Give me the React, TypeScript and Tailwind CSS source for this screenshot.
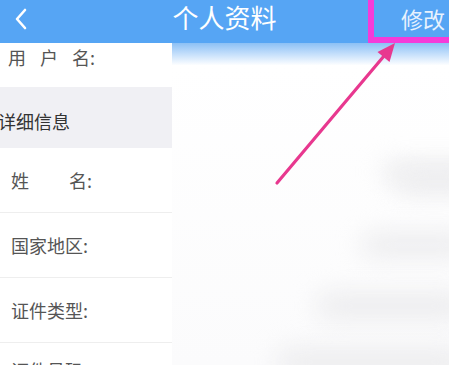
import React from 'react'

const FONT = { fontFamily: '"Noto Sans CJK SC", "Noto Sans", sans-serif' }

const rows = [
  { label: '姓\u3000\u3000 名:', sep: true },
  { label: '国家地区:', sep: true },
  { label: '证件类型:', sep: true },
  { label: '证件号码:', sep: false },
]

// 右侧模糊区域里的灰色块
const blobs = [
  'top-[120px] left-[210px] w-[200px] h-[18px]',
  'top-[128px] left-[225px] w-[80px] h-[22px]',
  'top-[190px] left-[190px] w-[110px] h-[24px]',
  'top-[250px] left-[145px] w-[150px] h-[26px]',
  'top-[306px] left-[105px] w-[190px] h-[26px]',
]

export default function App() {
  return (
    <div className="relative w-[449px] h-[365px] overflow-hidden bg-white" style={FONT}>
      {/* 顶栏 */}
      <div className="flex items-center h-[43px] bg-[#56a5f4] text-white">
        <div className="w-[40px] flex justify-center pl-[2px] pb-[6px]">
          <svg width="16" height="22" viewBox="0 0 16 22" fill="none">
            <path d="M12 2 L4 11 L12 20" stroke="white" strokeWidth="2.6" strokeLinecap="round" strokeLinejoin="round" />
          </svg>
        </div>
        <h1 className="flex-1 text-center text-[26px] leading-[32px] pb-[9px] pl-[8px]">个人资料</h1>
        <div className="w-[48px] text-[22px] leading-[28px] pb-[8px] text-[#e8f2fe]">修改</div>
      </div>

      <div className="flex h-[322px]">
        {/* 左侧列表 */}
        <div className="w-[172px] shrink-0 flex flex-col text-[#555] text-[18px]">
          <div className="h-[44px] shrink-0 flex pl-[8px] pt-[1px] leading-[26px]">
            <span>用</span>
            <span className="ml-[14px]">户</span>
            <span className="ml-[14px]">名:</span>
          </div>
          <div className="h-[61px] shrink-0 bg-[#f0f0f4] flex items-center pt-[8px] text-[#333]">
            <span className="-ml-[2px]">详细信息</span>
          </div>
          {rows.map((r) => (
            <div
              key={r.label}
              className={`h-[65px] shrink-0 flex pl-[11px] ${r.sep ? 'items-center border-b border-[#eeeeee]' : 'items-start pt-[14px]'}`}
            >
              {r.label}
            </div>
          ))}
        </div>

        {/* 右侧模糊区域 */}
        <div className="relative flex-1 overflow-hidden bg-gradient-to-b from-[#8cc0f5] via-[#ffffff] via-[7%] to-[#fbfbfc]">
          {blobs.map((b) => (
            <div key={b} className={`absolute ${b} rounded-full bg-[#ececee] blur-md`} />
          ))}
        </div>
      </div>

      {/* 标注框 */}
      <div className="absolute left-[368px] top-[-10px] w-[100px] h-[53px] border-[6px] border-[#f53bd9]" />

      {/* 标注箭头 */}
      <svg className="absolute left-0 top-0" width="449" height="365" viewBox="0 0 449 365">
        <line x1="277" y1="183" x2="384" y2="56" stroke="#e8388f" strokeWidth="3.2" strokeLinecap="round" />
        <polygon points="395,43 377.5,52 389.5,62" fill="#e8388f" />
      </svg>
    </div>
  )
}
